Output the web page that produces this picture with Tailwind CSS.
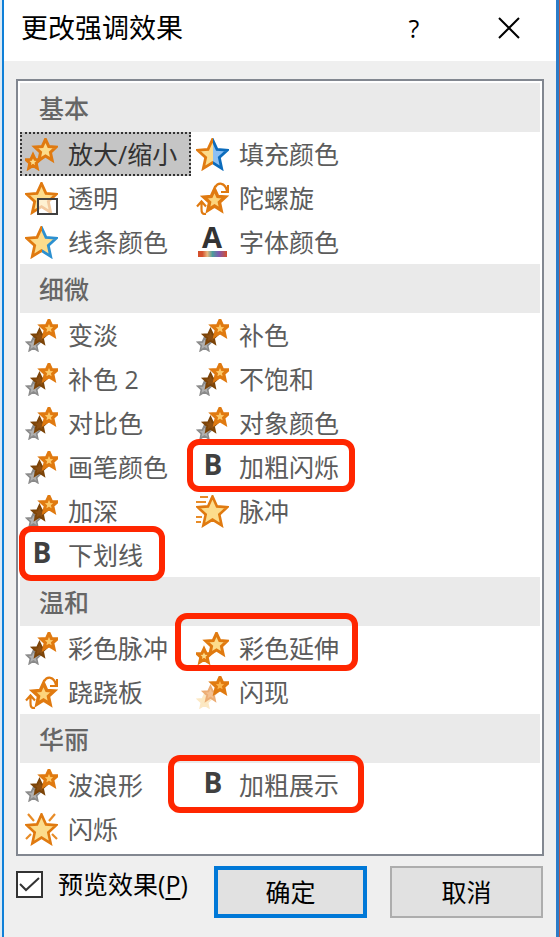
<!DOCTYPE html>
<html lang="zh-CN">
<head>
    <meta charset="UTF-8">
    <meta name="viewport" content="width=device-width, initial-scale=1.0">
    <title>更改强调效果</title>
    <script src="https://cdn.jsdelivr.net/npm/@tailwindcss/browser@4"></script>
</head>
<body class="flex min-h-screen border-l-2 border-r border-l-[#dceaf5] border-r-[#b8584a] bg-[#efefef] font-['Open_Sans','Noto_Sans_CJK_SC',sans-serif] text-[25px] leading-8 text-black">

<!-- 渐变和裁剪，不能 display:none -->
<svg class="absolute size-0" aria-hidden="true">
    <defs>
        <clipPath id="left-half"><rect width="17" height="33"/></clipPath>
        <clipPath id="right-half"><rect x="17" width="16" height="33"/></clipPath>
        <linearGradient id="rainbow">
            <stop offset="0.15" stop-color="#d4502c"/>
            <stop offset="0.32" stop-color="#e8b880"/>
            <stop offset="0.5" stop-color="#4c9c9c"/>
            <stop offset="0.72" stop-color="#8058b0"/>
            <stop offset="1" stop-color="#d4502c"/>
        </linearGradient>
    </defs>
</svg>

<!-- 图标 -->
<svg class="hidden" aria-hidden="true">
    <defs>
        <polygon id="star" points="0,-10 2.9,-3.6 9.5,-3.1 4.4,1.6 5.9,8.6 0,4.9 -5.9,8.6 -4.4,1.6 -9.5,-3.1 -2.9,-3.6" vector-effect="non-scaling-stroke"/>
    </defs>
    <symbol id="grow" viewBox="0 0 33 33">
        <g fill="#fcdc8c" stroke="#e07a10" stroke-width="3">
            <use href="#star" transform="translate(20.5 12.5) scale(1.12)"/>
            <use href="#star" transform="translate(8 24) scale(.72)"/>
        </g>
    </symbol>
    <symbol id="fill-color" viewBox="0 0 33 33">
        <g clip-path="url(#left-half)"><use href="#star" transform="translate(16.5 17) scale(1.55)" fill="#fcdc8c" stroke="#e07a10" stroke-width="2.8"/></g>
        <g clip-path="url(#right-half)"><use href="#star" transform="translate(16.5 17) scale(1.55)" fill="#8cc0f4" stroke="#0c6cbc" stroke-width="2.8"/></g>
    </symbol>
    <symbol id="line-color" viewBox="0 0 33 33">
        <g clip-path="url(#left-half)"><use href="#star" transform="translate(16.5 17) scale(1.55)" fill="#fcdc8c" stroke="#e07a10" stroke-width="2.8"/></g>
        <g clip-path="url(#right-half)"><use href="#star" transform="translate(16.5 17) scale(1.55)" fill="#fcdc8c" stroke="#2c90d0" stroke-width="2.8"/></g>
    </symbol>
    <symbol id="transparent" viewBox="0 0 33 33">
        <use href="#star" transform="translate(16.5 17) scale(1.55)" fill="#fcdc8c" stroke="#e07a10" stroke-width="2.8"/>
        <rect x="13" y="17" width="19" height="15" fill="#fff" fill-opacity=".6" stroke="#404040" stroke-width="2"/>
    </symbol>
    <symbol id="spin" viewBox="0 0 33 33">
        <use href="#star" transform="translate(18.5 18.5) scale(1.12)" fill="#fcd47c" stroke="#e07a10" stroke-width="3.4"/>
        <path d="M19 5.5C22 0 29 0 31 9M32 3v7h-7M10 32C6 32.500 5.500 30 5.500 27V20M1 24.500l4.500-5 4.500 5" fill="none" stroke="#e07a10" stroke-width="2.2"/>
    </symbol>
    <symbol id="font-color" viewBox="0 0 33 33">
        <text x="16" y="22" text-anchor="middle" font-size="29" font-weight="700" fill="#333">A</text>
        <rect x="2" y="25" width="29" height="6" fill="url(#rainbow)"/>
    </symbol>
    <symbol id="fade" viewBox="0 0 33 33">
        <use href="#star" transform="translate(8.5 25.5) scale(.72)" fill="#b0b0b0" stroke="#8a8a8a" stroke-width="1.6"/>
        <use href="#star" transform="translate(14.5 18) scale(.76)" fill="#8c5014" stroke="#7c4408" stroke-width="2"/>
        <use href="#star" transform="translate(24 9.5) scale(.84)" fill="#fcc868" stroke="#e07a10" stroke-width="3.2"/>
    </symbol>
    <symbol id="flash" viewBox="0 0 33 33">
        <use href="#star" transform="translate(8.5 25.5) scale(.72)" fill="#fce8c0" stroke="#fce8c4" stroke-width="1.6"/>
        <use href="#star" transform="translate(14.5 18) scale(.76)" fill="#f4c090" stroke="#ecac74" stroke-width="2"/>
        <use href="#star" transform="translate(24 9.5) scale(.84)" fill="#fcb44c" stroke="#e07a10" stroke-width="3.2"/>
    </symbol>
    <symbol id="bold" viewBox="0 0 33 33">
        <text x="17" y="24" text-anchor="middle" font-size="28" font-weight="700" fill="#404040">B</text>
    </symbol>
    <symbol id="pulse" viewBox="0 0 33 33">
        <use href="#star" transform="translate(16.5 17) scale(1.55)" fill="#fcdc8c" stroke="#e07a10" stroke-width="2.6"/>
        <path d="M4 2h8M0 7h10M0 22h6M0 27h5" stroke="#e88c28" stroke-width="2"/>
    </symbol>
    <symbol id="shimmer" viewBox="0 0 33 33">
        <use href="#star" transform="translate(16.5 17) scale(1.55)" fill="#fcdc8c" stroke="#e07a10" stroke-width="2.6"/>
        <path d="M3 1l6 7M30 1l-6 7M1 26l5-5M32 26l-5-5" stroke="#e88c28" stroke-width="2.2"/>
    </symbol>
</svg>

<main class="flex-1 border-l-2 border-r-[3px] border-l-[#0f80d8] border-r-[#2c7cc8]">
    <header class="flex h-[61px] items-center bg-white pb-1.5 pl-[17px] pr-9">
        <h1 class="text-[27px]">更改强调效果</h1>
        <button class="ml-auto w-8" aria-label="帮助">?</button>
        <button class="ml-[68px]" aria-label="关闭">
            <svg class="size-[22px]" viewBox="0 0 22 22" stroke="#000" stroke-width="2"><path d="M1 1l20 20M21 1L1 21"/></svg>
        </button>
    </header>

    <!-- 效果列表 -->
    <div class="mx-3 mt-[18px] border-2 border-[#828790] bg-white p-0.5 pb-[3px] text-[#5c5c5c]
                [&_h2]:flex [&_h2]:h-[49px] [&_h2]:items-center [&_h2]:bg-[#eaeaea] [&_h2]:pl-[19px] [&_h2]:font-medium [&_h2]:text-[#666]
                [&_ul]:grid [&_ul]:grid-cols-[171px_171px] [&_li]:relative
                [&_button]:flex [&_button]:h-11 [&_button]:w-full [&_button]:items-center [&_button]:gap-2.5 [&_button]:border-2 [&_button]:border-transparent [&_button]:pl-[3px] [&_button]:whitespace-nowrap
                [&_svg]:size-[33px] [&_svg]:shrink-0">
        <section>
            <h2>基本</h2>
            <ul>
                <li><button class="border-dotted border-[#333]! bg-[#c5c5c5] text-[#333]"><svg><use href="#grow"/></svg>放大/缩小</button></li>
                <li><button><svg><use href="#fill-color"/></svg>填充颜色</button></li>
                <li><button><svg><use href="#transparent"/></svg>透明</button></li>
                <li><button><svg><use href="#spin"/></svg>陀螺旋</button></li>
                <li><button><svg><use href="#line-color"/></svg>线条颜色</button></li>
                <li><button><svg><use href="#font-color"/></svg>字体颜色</button></li>
            </ul>
        </section>
        <section>
            <h2>细微</h2>
            <ul>
                <li><button><svg><use href="#fade"/></svg>变淡</button></li>
                <li><button><svg><use href="#fade"/></svg>补色</button></li>
                <li><button><svg><use href="#fade"/></svg>补色 2</button></li>
                <li><button><svg><use href="#fade"/></svg>不饱和</button></li>
                <li><button><svg><use href="#fade"/></svg>对比色</button></li>
                <li><button><svg><use href="#fade"/></svg>对象颜色</button></li>
                <li><button><svg><use href="#fade"/></svg>画笔颜色</button></li>
                <li>
                    <button><svg><use href="#bold"/></svg>加粗闪烁</button>
                    <span class="pointer-events-none absolute -left-1 -top-1.5 z-10 h-[53px] w-[168px] rounded-xl border-6 border-[#ff2600]"></span>
                </li>
                <li><button><svg><use href="#fade"/></svg>加深</button></li>
                <li><button><svg><use href="#pulse"/></svg>脉冲</button></li>
                <li>
                    <button><svg><use href="#bold"/></svg>下划线</button>
                    <span class="pointer-events-none absolute -left-px -top-[7px] z-10 h-[55px] w-[146px] rounded-xl border-6 border-[#ff2600]"></span>
                </li>
            </ul>
        </section>
        <section>
            <h2>温和</h2>
            <ul>
                <li><button><svg><use href="#fade"/></svg>彩色脉冲</button></li>
                <li>
                    <button><svg><use href="#grow"/></svg>彩色延伸</button>
                    <span class="pointer-events-none absolute -left-4 -top-[13px] z-10 h-[58px] w-[183px] rounded-xl border-6 border-[#ff2600]"></span>
                </li>
                <li><button><svg><use href="#spin"/></svg>跷跷板</button></li>
                <li><button><svg><use href="#flash"/></svg>闪现</button></li>
            </ul>
        </section>
        <section>
            <h2>华丽</h2>
            <ul>
                <li><button><svg><use href="#fade"/></svg>波浪形</button></li>
                <li>
                    <button><svg><use href="#bold"/></svg>加粗展示</button>
                    <span class="pointer-events-none absolute -left-[23px] -top-2 z-10 h-[58px] w-[196px] rounded-xl border-6 border-[#ff2600]"></span>
                </li>
                <li><button><svg><use href="#shimmer"/></svg>闪烁</button></li>
            </ul>
        </section>
    </div>

    <footer class="mx-3 mt-2.5 flex items-start pr-px">
        <label for="preview" class="mt-0.5 flex items-center gap-[15px] whitespace-nowrap">
            <span class="grid">
                <input type="checkbox" id="preview" checked class="peer size-[27px] appearance-none border-2 border-[#333] bg-white [grid-area:1/1]">
                <svg class="pointer-events-none invisible size-[27px] [grid-area:1/1] peer-checked:visible" viewBox="0 0 27 27" fill="none" stroke="#333" stroke-width="2"><path d="M4 13l6 6L23 7"/></svg>
            </span>
            <span>预览效果(<u class="underline-offset-4">P</u>)</span>
        </label>
        <button class="ml-auto h-13 w-[153px] border-4 border-[#0078d7] bg-[#e1e1e1]">确定</button>
        <button class="ml-[23px] h-13 w-[153px] border-2 border-[#adadad] bg-[#e1e1e1]">取消</button>
    </footer>
</main>
</body>
</html>
